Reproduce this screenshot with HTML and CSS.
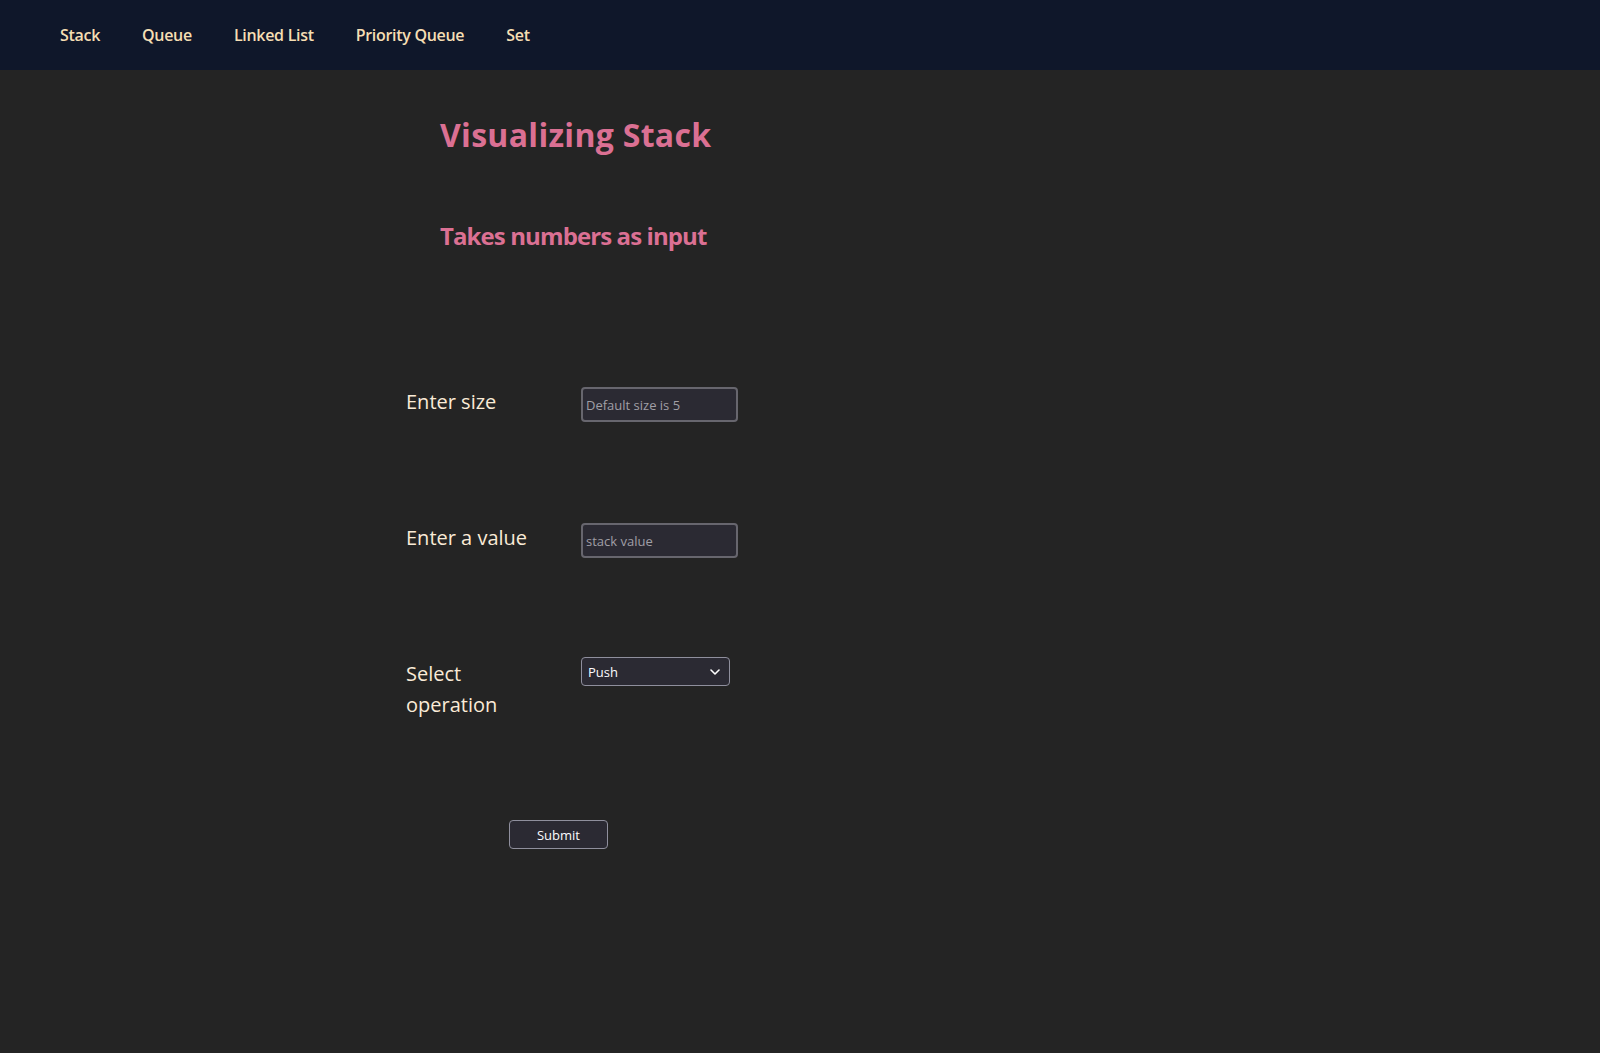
FILE: index.html
```html
<!DOCTYPE html>
<html lang="en">
<head>
<meta charset="utf-8">
<title>Visualizing Stack</title>
<link rel="stylesheet" href="styles.css">
</head>
<body>
<nav class="nav">
  <a class="nav-link" href="#">Stack</a>
  <a class="nav-link" href="#">Queue</a>
  <a class="nav-link" href="#">Linked List</a>
  <a class="nav-link" href="#">Priority Queue</a>
  <a class="nav-link" href="#">Set</a>
</nav>
<main class="main">
  <div class="titles">
    <h1 class="title">Visualizing Stack</h1>
    <h2 class="subtitle">Takes numbers as input</h2>
  </div>
  <form class="form">
    <div class="row">
      <label class="label" for="size">Enter size</label>
      <input class="field" id="size" type="text" placeholder="Default size is 5">
    </div>
    <div class="row">
      <label class="label" for="val">Enter a value</label>
      <input class="field" id="val" type="text" placeholder="stack value">
    </div>
    <div class="row">
      <label class="label" for="op">Select operation</label>
      <div class="select-wrap">
        <select class="select" id="op">
          <option>Push</option>
          <option>Pop</option>
        </select>
        <svg class="chevron" width="10" height="6" viewBox="0 0 10 6"><path d="M1 1l4 4 4-4" fill="none" stroke="#ffffff" stroke-width="1.6" stroke-linecap="round" stroke-linejoin="round"/></svg>
      </div>
    </div>
    <div class="submit-row">
      <button class="submit" type="button">Submit</button>
    </div>
  </form>
</main>
</body>
</html>
```
FILE: styles.css
```css
html, body {
  margin: 0;
  padding: 0;
  background: #242424;
  min-height: 100%;
}
body {
  font-family: "Open Sans", "Noto Sans", sans-serif;
  min-height: 1053px;
}
.nav {
  height: 70px;
  background: #0f172a;
  display: flex;
  align-items: center;
  padding-left: 60px;
  gap: 42px;
}
.nav-link {
  color: #f5deb3;
  text-decoration: none;
  font-size: 16px;
  font-weight: 600;
  line-height: 22px;
  letter-spacing: -0.3px;
}
.main {
  padding-left: 406px;
}
.titles {
  padding-left: 34px;
  padding-top: 43px;
}
.title {
  margin: 0;
  font-size: 32px;
  line-height: 44px;
  font-weight: 700;
  color: #db7093;
  letter-spacing: 0.3px;
}
.subtitle {
  margin: 62px 0 0;
  font-size: 24px;
  line-height: 33px;
  font-weight: 700;
  color: #db7093;
  letter-spacing: -0.9px;
}
.form {
  margin-top: 134px;
  display: flex;
  flex-direction: column;
  gap: 100px;
}
.row {
  display: flex;
  align-items: flex-start;
  gap: 35px;
  min-height: 36px;
}
.label {
  width: 140px;
  font-size: 20px;
  line-height: 31px;
  color: #faebd7;
}
.field {
  margin-top: 1px;
  width: 157px;
  height: 35px;
  box-sizing: border-box;
  background: #2b2a33;
  border: 2px solid #67666e;
  border-radius: 4px;
  padding: 0 3px;
  color: #fbfbfe;
  font-family: "Open Sans", sans-serif;
  font-size: 13px;
  outline: none;
}
.field::placeholder {
  color: #a09fa6;
}
.select-wrap {
  position: relative;
  margin-top: -1px;
}
.select {
  appearance: none;
  -webkit-appearance: none;
  width: 149px;
  height: 29px;
  box-sizing: border-box;
  background: #2b2a33;
  border: 1px solid #8f8f9d;
  border-radius: 4px;
  padding: 0 6px;
  color: #fbfbfe;
  font-family: "Open Sans", sans-serif;
  font-size: 13px;
}
.chevron {
  position: absolute;
  right: 10px;
  top: 12px;
  pointer-events: none;
}
.submit-row {
  padding-left: 103px;
}
.submit {
  width: 99px;
  height: 29px;
  box-sizing: border-box;
  background: #2b2a33;
  border: 1px solid #8f8f9d;
  border-radius: 4px;
  color: #fbfbfe;
  font-family: "Open Sans", sans-serif;
  font-size: 13px;
  padding: 0;
}
```
